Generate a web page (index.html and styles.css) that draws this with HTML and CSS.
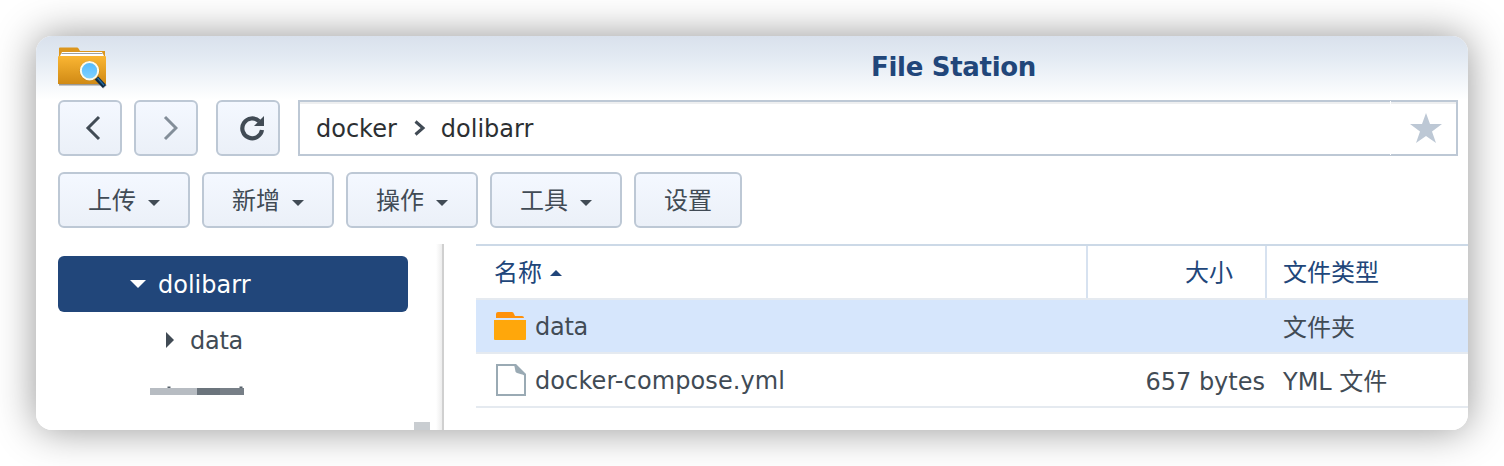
FILE: index.html
```
<!DOCTYPE html>
<html lang="zh-CN">
<head>
<meta charset="utf-8">
<title>File Station</title>
<link rel="stylesheet" href="styles.css">
</head>
<body>
<main class="window">
  <header class="titlebar">
    <svg class="app-icon" width="50" height="44" viewBox="0 0 50 44">
      <defs>
        <linearGradient id="folder" x1="0" y1="0" x2="0" y2="1"><stop offset="0" stop-color="#fab633"/><stop offset="1" stop-color="#d08a15"/></linearGradient>
        <linearGradient id="lens" x1="0" y1="0" x2="0" y2="1"><stop offset="0" stop-color="#52b9ff"/><stop offset="1" stop-color="#83d3ff"/></linearGradient>
      </defs>
      <path d="M1 38h46v1.500H1z" fill="#5d5850" opacity=".6"/>
      <path d="M1 12V2.500q0-1 1-1h17q1 0 1.500 1l1.500 2.500H47v7z" fill="#dc961d"/>
      <path d="M4 6h40l2 4H2z" fill="#fff"/>
      <path d="M3.500 7.500h41" stroke="#9da1a3"/>
      <path d="M0 11q0-1 1-1h46q1 0 1 1v27H0z" fill="url(#folder)"/>
      <path d="M38.500 32l8.500 9" stroke="#555" stroke-width="5" opacity=".35"/>
      <path d="M38.500 32l8 8.500" stroke="#0d2944" stroke-width="4.500"/>
      <path d="M39.500 32l6.500 7.200" stroke="#286da0" stroke-width="1.300"/>
      <circle cx="31.500" cy="25" r="9.200" fill="none" stroke="#b87a17" stroke-width="1.600"/>
      <circle cx="31.500" cy="24.700" r="8.700" fill="url(#lens)" stroke="#fffbea" stroke-width="2"/>
    </svg>
    <h1 class="title">File Station</h1>
  </header>

  <nav class="navigation">
    <button class="button icon-button back" aria-label="后退"><svg width="24" height="28" viewBox="0 0 24 28"><path d="M19 3L8 14l11 11" fill="none" stroke="#414b55" stroke-width="3"/></svg></button>
    <button class="button icon-button forward" aria-label="前进"><svg width="24" height="28" viewBox="0 0 24 28"><path d="M11 3l11 11-11 11" fill="none" stroke="#838e99" stroke-width="3"/></svg></button>
    <button class="button icon-button refresh" aria-label="刷新"><svg width="28" height="28" viewBox="0 0 28 28"><path d="M24 16A9.900 9.900 0 1 1 21.200 7.300" fill="none" stroke="#414b55" stroke-width="4.200"/><path d="M26 2v10H16z" fill="#414b55"/></svg></button>
    <div class="address">
      <div class="path"><span class="text">docker</span><svg class="crumb" width="12" height="16" viewBox="0 0 12 16"><path d="M1.500 1.500L9 8l-7.500 6.500" fill="none" stroke="#414b55" stroke-width="3"/></svg><span class="text">dolibarr</span></div>
      <button class="favorite" aria-label="收藏"><svg width="32" height="30" viewBox="0 0 32 30"><path d="M16 0l4 11h12l-10 7.500L26 30l-10-7-10 7 4-11.500L0 11h12z" fill="#bdc8d5"/></svg></button>
    </div>
  </nav>

  <div class="toolbar">
    <button class="button menu-button"><span class="text">上传</span><svg width="12" height="6" viewBox="0 0 12 6"><path d="M0 0h12L6 6z"/></svg></button>
    <button class="button menu-button"><span class="text">新增</span><svg width="12" height="6" viewBox="0 0 12 6"><path d="M0 0h12L6 6z"/></svg></button>
    <button class="button menu-button"><span class="text">操作</span><svg width="12" height="6" viewBox="0 0 12 6"><path d="M0 0h12L6 6z"/></svg></button>
    <button class="button menu-button"><span class="text">工具</span><svg width="12" height="6" viewBox="0 0 12 6"><path d="M0 0h12L6 6z"/></svg></button>
    <button class="button menu-button plain"><span class="text">设置</span></button>
  </div>

  <div class="content">
    <aside class="sidebar">
      <div class="tree">
        <div class="tree-item selected"><svg width="16" height="8" viewBox="0 0 16 8"><path d="M0 0h16L8 8z"/></svg><span class="text">dolibarr</span></div>
        <div class="tree-item child"><svg width="8" height="16" viewBox="0 0 8 16"><path d="M0 0v16l8-8z"/></svg><span class="text narrow">data</span></div>
        <svg class="redacted" width="96" height="11" viewBox="0 0 96 11"><path d="M1 2h47v7H1z" fill="#b7bcc2"/><path d="M48 2h23v7H48z" fill="#6b747c"/><path d="M71 2h24v7H71z" fill="#777f87"/><path d="M18.500 .5h3V2h-3zM90.500 .5h3V2h-3z" fill="#56606a"/></svg>
      </div>
      <div class="scroll-thumb"></div>
      <div class="splitter"></div>
    </aside>
    <section class="files">
      <div class="row head">
        <div class="cell name"><span class="text">名称</span><svg class="sort" width="12" height="6" viewBox="0 0 12 6"><path d="M0 6h12L6 0z"/></svg></div>
        <div class="cell size"><span class="text">大小</span></div>
        <div class="cell type"><span class="text">文件类型</span></div>
      </div>
      <div class="row active">
        <div class="cell name"><svg class="file-icon" width="32" height="32" viewBox="0 0 32 32"><path d="M2 8V4q0-2 2-2h14q1.500 0 2 2l1 2h7q2 0 2 2z" fill="#ff9109"/><path d="M0 10h32v19q0 1-1 1H1q-1 0-1-1z" fill="#ffa70b"/></svg><span class="text narrow">data</span></div>
        <div class="cell size"></div>
        <div class="cell type"><span class="text lowered">文件夹</span></div>
      </div>
      <div class="row">
        <div class="cell name"><svg class="file-icon" width="32" height="32" viewBox="0 0 32 32"><path d="M3 1h18l10 10v20H3z" fill="#fff" stroke="#9aaab4" stroke-width="2"/><path d="M20 0h2l10 10v2c-3-2-7-2-9-3q-2-1-2-4z" fill="#9aaab4"/></svg><span class="text filename">docker-compose.yml</span></div>
        <div class="cell size"><span class="text lowered">657 bytes</span></div>
        <div class="cell type"><span class="text lowered">YML 文件</span></div>
      </div>
    </section>
  </div>
</main>
</body>
</html>
```

FILE: styles.css
```
* { box-sizing: border-box; }
body {
  margin: 0;
  padding: 36px;
  height: 466px;
  overflow: hidden;
  background: #fff;
  font: 24px/28px "DejaVu Sans", "Noto Sans CJK SC", sans-serif;
  color: #414b55;
}
.window {
  display: flex;
  flex-direction: column;
  height: 394px;
  overflow: hidden;
  border-radius: 16px;
  background: linear-gradient(#d9e1ec, #e3eaf3 22px, #fff 64px);
  box-shadow: 0 0 40px rgba(0, 0, 0, .42);
}
.text { padding-top: 2px; }
.titlebar { display: flex; height: 64px; padding: 10px 22px 0; }
.app-icon { flex: none; }
.title {
  margin: 7px 0 0 763px;
  font-size: 26px;
  line-height: 28px;
  font-weight: 700;
  letter-spacing: -.3px;
  color: #21467a;
}
.navigation { display: flex; height: 56px; padding: 0 10px 0 22px; }
.button {
  height: 56px;
  border: 2px solid #bdc8d5;
  border-radius: 6px;
  background: linear-gradient(#f4f8ff, #ebf0f8);
  color: #414b55;
  font: inherit;
}
.icon-button {
  display: flex;
  align-items: center;
  justify-content: center;
  flex: none;
  width: 64px;
  padding: 0;
  margin-right: 12px;
}
.back { padding-left: 4px; }
.forward { margin-right: 18px; }
.refresh { margin-right: 18px; padding-left: 8px; }
.address {
  display: flex;
  flex: 1;
  border: 2px solid #bdc8d5;
  background: linear-gradient(#eeeff0 2px, #fff 2px);
  color: #2c2f32;
}
.path { display: flex; flex: 1; align-items: center; padding-left: 16px; }
.crumb { margin: 0 15px 0 17px; }
.favorite {
  display: flex;
  align-items: center;
  justify-content: center;
  width: 66px;
  margin: -1px 0;
  padding: 0 0 0 4px;
  border: 0;
  border-left: 1px solid #fff;
  background: none;
}
.toolbar { display: flex; gap: 12px; padding: 16px 22px; }
.menu-button {
  display: flex;
  align-items: center;
  width: 132px;
  padding: 0 0 0 28px;
}
.menu-button svg { margin: 5px 0 0 12px; fill: #414b55; }
.plain { width: 108px; }
.content { display: flex; flex: 1; }
.sidebar { display: flex; width: 408px; padding-left: 22px; }
.tree { width: 350px; padding-top: 12px; }
.tree-item {
  display: flex;
  align-items: center;
  height: 56px;
  padding-left: 72px;
  border-radius: 6px;
}
.tree-item svg { margin-right: 12px; fill: #414b55; }
.selected { background: #21467a; color: #fff; }
.selected svg { fill: #fff; }
.child { padding-left: 108px; }
.child svg { margin-right: 16px; }
.redacted { display: block; margin: 18px 0 0 91px; }
.scroll-thumb {
  align-self: flex-end;
  width: 16px;
  height: 8px;
  margin: 0 6px;
  background: #c9cdd1;
}
.splitter {
  width: 8px;
  border-right: 2px solid #d0d0d0;
  background: linear-gradient(90deg, #fff, #ededed);
}
.files { flex: 1; padding-left: 32px; }
.row {
  display: flex;
  height: 54px;
  border-bottom: 2px solid #e5eaf0;
}
.head { height: 56px; border-top: 2px solid #ccd9e7; color: #21467a; }
.cell { display: flex; align-items: center; height: 52px; }
.name { width: 610px; padding-left: 18px; }
.size { width: 179px; justify-content: flex-end; }
.type { padding-left: 18px; }
.head .size { width: 181px; padding-right: 32px; border: solid #d7e2f0; border-width: 0 2px; }
.head .type { padding-left: 16px; }
.sort { margin: 1px 0 0 8px; fill: #21467a; }
.active { background: #d6e6fc; }
.lowered { padding-top: 4px; }
.narrow { letter-spacing: -.25px; }
.filename { letter-spacing: .1px; }
.file-icon { margin-right: 9px; }
```
